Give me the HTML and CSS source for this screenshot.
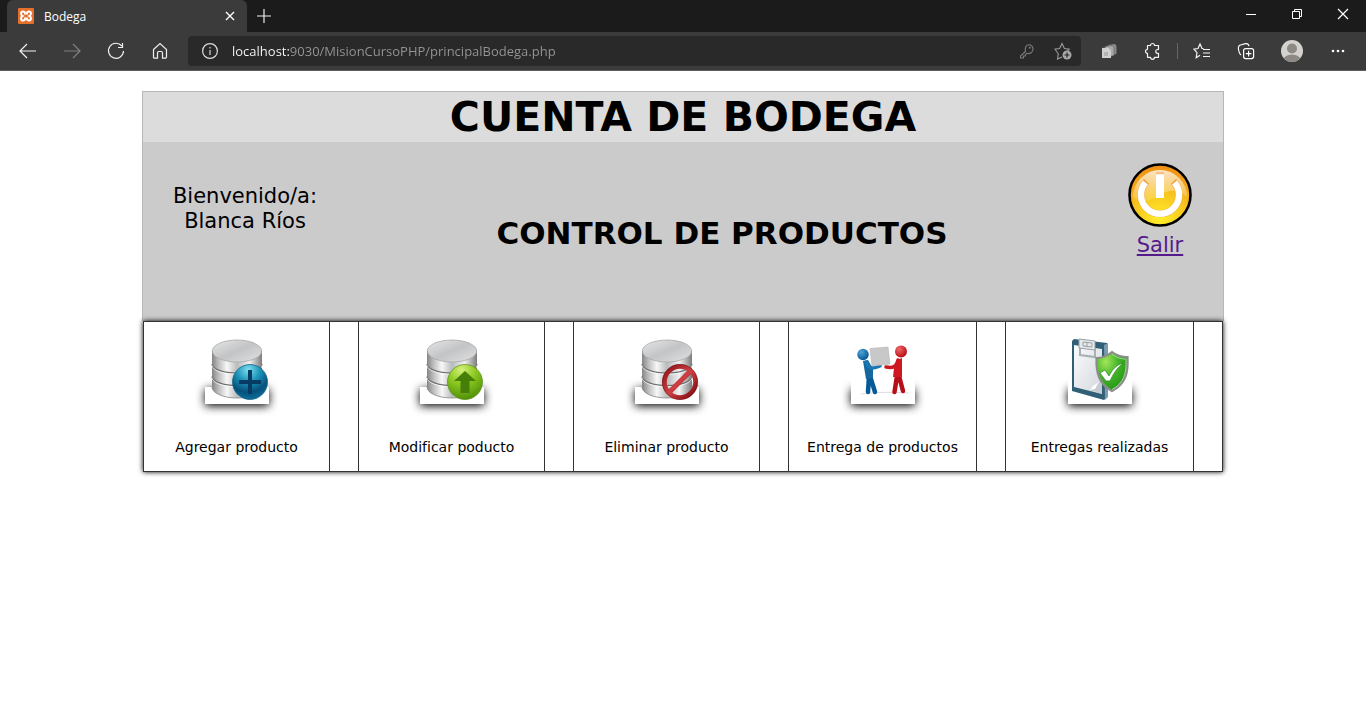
FILE: index.html
```html
<!DOCTYPE html>
<html lang="es">
<head>
<meta charset="utf-8">
<title>Bodega</title>
<link rel="stylesheet" href="styles.css">
</head>
<body>
<svg class="defs" width="0" height="0" aria-hidden="true">
  <defs>
    <linearGradient id="metal"><stop offset="0" stop-color="#858585"/><stop offset=".13" stop-color="#bdbdbd"/><stop offset=".3" stop-color="#f8f8f8"/><stop offset=".5" stop-color="#b9bbbc"/><stop offset=".75" stop-color="#f1f1f1"/><stop offset="1" stop-color="#7c7c7c"/></linearGradient>
    <linearGradient id="lid" x1="0" y1="0" x2="1" y2="1"><stop offset="0" stop-color="#e6e6e6"/><stop offset=".5" stop-color="#c2c4c6"/><stop offset="1" stop-color="#e2e2e2"/></linearGradient>
    <radialGradient id="blue" cx=".45" cy=".15" r=".85"><stop offset="0" stop-color="#7fdfee"/><stop offset=".4" stop-color="#1b93b9"/><stop offset=".75" stop-color="#07507c"/><stop offset="1" stop-color="#0a6f9a"/></radialGradient>
    <radialGradient id="green" cx=".4" cy=".15" r=".9"><stop offset="0" stop-color="#d3f07a"/><stop offset=".45" stop-color="#8cc820"/><stop offset="1" stop-color="#4c8a06"/></radialGradient>
    <linearGradient id="red" x1="0" y1="0" x2="1" y2="1"><stop offset="0" stop-color="#8c1217"/><stop offset=".5" stop-color="#cf4045"/><stop offset="1" stop-color="#7c080c"/></linearGradient>
    <radialGradient id="power" cx=".5" cy=".9" r=".9"><stop offset="0" stop-color="#fff02a"/><stop offset=".5" stop-color="#f8c41e"/><stop offset="1" stop-color="#f08c14"/></radialGradient>
    <linearGradient id="gloss" x1="0" y1="0" x2="0" y2="1"><stop offset="0" stop-color="#fff" stop-opacity=".75"/><stop offset="1" stop-color="#fff" stop-opacity=".12"/></linearGradient>
    <radialGradient id="shield" cx=".3" cy=".25" r=".8"><stop offset="0" stop-color="#a4e65c"/><stop offset=".5" stop-color="#44b428"/><stop offset="1" stop-color="#219414"/></radialGradient>
    <radialGradient id="bluehead" cx=".35" cy=".3" r=".7"><stop offset="0" stop-color="#4fa3d4"/><stop offset="1" stop-color="#075a98"/></radialGradient>
    <radialGradient id="redhead" cx=".35" cy=".3" r=".7"><stop offset="0" stop-color="#ef6a6c"/><stop offset="1" stop-color="#b90d16"/></radialGradient>
    <linearGradient id="paper" x1="0" y1="0" x2="1" y2="1"><stop offset="0" stop-color="#fbfcfd"/><stop offset="1" stop-color="#d2d6dc"/></linearGradient>
    <g id="database">
      <path d="M7 11v36a25 11 0 0 0 50 0V11z" fill="url(#metal)"/>
      <path d="M7 24a25 9 0 0 0 50 0M7 36.500a25 9 0 0 0 50 0" fill="none" stroke="#6d6f71" stroke-width="1.200"/>
      <path d="M7 25.300a25 9 0 0 0 50 0M7 37.800a25 9 0 0 0 50 0" fill="none" stroke="#fff" stroke-width=".7"/>
      <path d="M7 47a25 11 0 0 0 50 0" fill="none" stroke="#858585" stroke-width=".8"/>
      <ellipse cx="32" cy="11" rx="24.700" ry="11" fill="url(#lid)" stroke="#a2a2a2" stroke-width=".7"/>
    </g>
  </defs>
</svg>

<header class="browser">
  <div class="tabs">
    <div class="tab">
      <svg class="icon" width="16" height="16" viewBox="0 0 16 16"><rect width="16" height="16" rx="1" fill="#e5702b"/><path d="M5 3.500c-2.500 0-2.500 3.500-.5 4.500-2 1-2 4.500.5 4.500 1.500 0 2-1 2-2h2c0 1 .5 2 2 2 2.500 0 2.500-3.500.5-4.500 2-1 2-4.500-.5-4.500-1.500 0-2 1-2 2H7c0-1-.5-2-2-2z" fill="none" stroke="#fff" stroke-width="2"/></svg>
      <span class="tab-title">Bodega</span>
      <button class="tool close" aria-label="Cerrar pestaña"><svg width="10" height="10" viewBox="0 0 10 10"><path d="M1 1l8 8M9 1L1 9" stroke="#fff" stroke-width="1.400"/></svg></button>
    </div>
    <button class="tool new" aria-label="Nueva pestaña"><svg width="14" height="14" viewBox="0 0 14 14"><path d="M7 0v14M0 7h14" stroke="#eee" stroke-width="1.200"/></svg></button>
    <div class="window-buttons">
      <button class="tool" aria-label="Minimizar"><svg width="10" height="10" viewBox="0 0 10 10"><path d="M0 5.500h10" stroke="#fff"/></svg></button>
      <button class="tool" aria-label="Restaurar"><svg width="10" height="10" viewBox="0 0 10 10"><path d="M.5 2.500h7v7h-7zM2.500 2.500v-2h7v7h-2" fill="none" stroke="#fff"/></svg></button>
      <button class="tool" aria-label="Cerrar"><svg width="10" height="10" viewBox="0 0 10 10"><path d="M0 0l10 10M10 0L0 10" stroke="#fff" stroke-width="1.200"/></svg></button>
    </div>
  </div>
  <div class="toolbar">
    <button class="tool" aria-label="Atrás"><svg width="18" height="16" viewBox="0 0 18 16"><path d="M17 8H1.500M8 1L1 8l7 7" fill="none" stroke="#f4f4f4" stroke-width="1.200"/></svg></button>
    <button class="tool" aria-label="Adelante"><svg width="18" height="16" viewBox="0 0 18 16"><path d="M1 8h15.500M10 1l7 7-7 7" fill="none" stroke="#808080" stroke-width="1.200"/></svg></button>
    <button class="tool" aria-label="Actualizar"><svg width="18" height="18" viewBox="0 0 18 18"><path d="M14.800 4A7.500 7.500 0 1 0 16.500 9M15.500 1v4.500H11" fill="none" stroke="#f0f0f0" stroke-width="1.200"/></svg></button>
    <button class="tool" aria-label="Inicio"><svg width="16" height="18" viewBox="0 0 16 18"><path d="M1.500 7.500L8 1.500l6.500 6v7.500c0 .8-.3 1.200-1 1.200h-3V11c0-1-.5-1.500-1.200-1.500H6.700c-.7 0-1.200.5-1.200 1.500v5.200h-3c-.7 0-1-.4-1-1.200z" fill="none" stroke="#eee" stroke-width="1.200"/></svg></button>
    <div class="address">
      <svg class="icon" width="16" height="16" viewBox="0 0 16 16"><circle cx="8" cy="8" r="7.400" fill="none" stroke="#ddd" stroke-width="1.200"/><path d="M8 7v5M8 4v1.500" stroke="#ccc" stroke-width="1.300"/></svg>
      <input class="url" type="text" aria-label="Dirección" value="localhost:9030/MisionCursoPHP/principalBodega.php">
      <button class="tool" aria-label="Contraseñas"><svg width="16" height="16" viewBox="0 0 16 16"><path d="M6.500 8.500L1.500 13v2h3v-2h2v-1.500l1.500-1.200c3 1 6-1 6-4.300a4.300 4.300 0 0 0-4.300-4.300C7 1.700 5.500 5.500 6.500 8.500z" fill="none" stroke="#7d7d7d" stroke-width="1.100"/><circle cx="10.800" cy="4.800" r="1" fill="#7d7d7d"/></svg></button>
      <button class="tool" aria-label="Agregar a favoritos"><svg width="18" height="18" viewBox="0 0 18 18"><path d="M8 15l-4.500 2 .8-5.200L1 7.200l4.600-.7L8 1.500l2.400 5 4.800.7-1.700 1.800" fill="none" stroke="#9c9c9c" stroke-width="1.100"/><circle cx="13" cy="13" r="4.500" fill="#a6a6a6"/><path d="M13 10.500v5M10.500 13h5" stroke="#292929" stroke-width="1.200"/></svg></button>
    </div>
    <div class="actions">
      <button class="tool" aria-label="Extensión"><svg width="16" height="16" viewBox="0 0 16 16"><path d="M7 2l7-1 1.500 2v8l-5 1z" fill="#8a8a8a"/><path d="M4 3.500l7-1 2 2v8l-4 1z" fill="#a8a8a8" stroke="#606060" stroke-width=".6"/><path d="M1 5l6-.5 3 3V15H1z" fill="#d0d0d0"/><path d="M3 9h4v4H3z" fill="#b4b4b4"/></svg></button>
      <button class="tool" aria-label="Extensiones"><svg width="18" height="18" viewBox="0 0 18 18"><path d="M3.500 3.500h3a2 2 0 0 1 4 0h4v4h-.8a1.900 1.900 0 0 0 0 3.800h.8v4h-4a2 2 0 0 1-4 0h-3v-4a2 2 0 0 1 0-4z" fill="none" stroke="#f4f4f4" stroke-width="1.200" stroke-linejoin="round"/></svg></button>
      <span class="divider"></span>
      <button class="tool" aria-label="Favoritos"><svg width="18" height="18" viewBox="0 0 18 18"><path d="M10.500 6.500H9L7 2 5 6.500l-4 .6 3 3.600-.8 5L7 13.300M10 7.500h7M10 11h7M10 14.500h7" fill="none" stroke="#f4f4f4" stroke-width="1.200"/></svg></button>
      <button class="tool" aria-label="Colecciones"><svg width="18" height="18" viewBox="0 0 18 18"><rect x="6.600" y="6.600" width="10" height="10" rx="2" fill="none" stroke="#fff" stroke-width="1.200"/><path d="M11.600 8.800v5.600M8.800 11.600h5.600M4.200 13C2.500 12.500 2 10 1.500 7.500 1 4.500 1.500 3.500 3.500 3l5-1.300c2-.5 3 .5 3.500 2.500" fill="none" stroke="#fff" stroke-width="1.200"/></svg></button>
      <button class="tool profile" aria-label="Perfil"><svg width="22" height="22" viewBox="0 0 22 22"><clipPath id="face"><circle cx="11" cy="11" r="11"/></clipPath><g clip-path="url(#face)"><path d="M0 0h22v22H0z" fill="#d4d2ce"/><circle cx="11" cy="8.500" r="5" fill="#8d8985"/><ellipse cx="11" cy="20" rx="8.500" ry="5.500" fill="#8d8985"/></g></svg></button>
      <button class="tool" aria-label="Más opciones"><svg width="14" height="4" viewBox="0 0 14 4"><circle cx="2" cy="2" r="1.300" fill="#fff"/><circle cx="7" cy="2" r="1.300" fill="#fff"/><circle cx="12" cy="2" r="1.300" fill="#fff"/></svg></button>
    </div>
  </div>
</header>

<main class="page">
  <section class="account">
    <h1 class="title">CUENTA DE BODEGA</h1>
    <div class="summary">
      <p class="welcome">Bienvenido/a:<br>Blanca Ríos</p>
      <h2 class="subtitle">CONTROL DE PRODUCTOS</h2>
      <a class="logout" href="#salir">
        <svg width="64" height="64" viewBox="0 0 64 64"><circle cx="32" cy="32" r="30.500" fill="url(#power)" stroke="#000" stroke-width="2.600"/><path d="M5 34a27 27 0 0 1 54 0c-8-8-18-8-27-2S12 41 5 34z" fill="url(#gloss)"/><path d="M18.500 18.500a19 19 0 1 0 27 0" fill="none" stroke="#ee9a3a" stroke-width="7"/><path d="M17.500 19.500a19 19 0 1 0 29 0" fill="none" stroke="#fff" stroke-width="6.500"/><path d="M28 10h8" stroke="#ee9a5a"/><path d="M28 11.500h8V35h-8z" fill="#fff"/></svg>
        <span>Salir</span>
      </a>
    </div>
  </section>

  <nav class="menu" aria-label="Productos">
    <a class="option" href="#agregar">
      <span class="picture"><svg width="64" height="64" viewBox="0 0 64 64"><use href="#database"/><circle cx="45" cy="42" r="17.500" fill="url(#blue)" stroke="#0b5b80" stroke-width=".7"/><path d="M43 30h4v10h9v4h-9v10h-4V44h-9v-4h9z" fill="#063c63"/></svg></span>
      <span>Agregar producto</span>
    </a>
    <a class="option" href="#modificar">
      <span class="picture"><svg width="64" height="64" viewBox="0 0 64 64"><use href="#database"/><circle cx="45" cy="42" r="17.500" fill="url(#green)" stroke="#568f10" stroke-width=".7"/><path d="M45 31l11 10h-6.500v12h-9V41H34z" fill="#467f08"/></svg></span>
      <span>Modificar poducto</span>
    </a>
    <a class="option" href="#eliminar">
      <span class="picture"><svg width="64" height="64" viewBox="0 0 64 64"><use href="#database"/><path d="M34.500 52L55 31.500" stroke="url(#red)" stroke-width="5"/><circle cx="45" cy="42" r="15.500" fill="none" stroke="url(#red)" stroke-width="4.500"/><circle cx="45" cy="42" r="17.600" fill="none" stroke="#710a0d" stroke-width=".6"/></svg></span>
      <span>Eliminar producto</span>
    </a>
    <a class="option" href="#entrega">
      <span class="picture"><svg class="solid" width="64" height="64" viewBox="0 0 64 64"><path d="M10 54c14-2 36-2 47-1" stroke="#ddd" fill="none"/><path d="M18 36l-1 16M19 36l5 16" stroke="#075a98" stroke-width="4.500" stroke-linecap="round"/><path d="M12 21l5-1 5 9v9l-7 1z" fill="#15689f"/><path d="M15 22c3 7 7 7 14 4" fill="none" stroke="#1b77b3" stroke-width="3.500" stroke-linecap="round"/><circle cx="12" cy="14.500" r="5.700" fill="url(#bluehead)"/><path d="M19 8.500l18-1.500 2 17-18 2z" fill="#c8c8c8" stroke="#b5b5b5" stroke-width=".6"/><path d="M46 36l-2.500 16M48 36l4 15" stroke="#b80e18" stroke-width="4.500" stroke-linecap="round"/><path d="M46 20l5-2v19h-9l1-9z" fill="#cf1822"/><path d="M47 20c-2 8-6 8-12 7" fill="none" stroke="#cb1721" stroke-width="3.500" stroke-linecap="round"/><circle cx="50" cy="11.500" r="6" fill="url(#redhead)"/></svg></span>
      <span>Entrega de productos</span>
    </a>
    <a class="option" href="#realizadas">
      <span class="picture"><svg class="solid" width="64" height="64" viewBox="0 0 64 64"><path d="M4 1l2-2 33 4v54l-3 3L4 51z" fill="#315f76"/><path d="M36 5l4-2v54l-3 3z" fill="#789eae"/><path d="M6 5l28 4v45L6 47z" fill="url(#paper)"/><path d="M22 50l9-8 3 2v10z" fill="#c6cbd1"/><path d="M22 50l5-1 4-7-6 4z" fill="#fff"/><path d="M12 7v8l15 2V8" fill="none" stroke="#a8b0b6" stroke-width="2"/><path d="M11-1l16 2v9l-16-2z" fill="#e7eaec" stroke="#9a9fa4"/><path d="M15 2l9 1v4l-9-1zM19 2v4" fill="none" stroke="#989ea3"/><path d="M44 12c5 4 10 5 15.500 5 1 16-2 27-15.500 34-13-7-16-18-15.500-33C35 18 39 16 44 12z" fill="url(#shield)" stroke="#8a8f8b" stroke-width="2.200"/><path d="M44 14c5 4 9 5 14 5 .6 14-2 24-14 30.500" fill="none" stroke="#d7e5d1" stroke-width=".7"/><path d="M32 33l5-3 4 6c3-6 7-11 14-13-6 5-10 11-13 18h-4z" fill="#fff" stroke="#288b1b" stroke-width=".7"/></svg></span>
      <span>Entregas realizadas</span>
    </a>
  </nav>
</main>
</body>
</html>
```
FILE: styles.css
```css
* { box-sizing: border-box; }

body {
  min-height: 100vh;
  margin: 0;
  background: #fff;
  color: #000;
  font-family: Verdana, "DejaVu Sans", sans-serif;
}

.defs { position: absolute; }

svg { display: block; overflow: visible; }

/* Browser frame */
.browser {
  background: #3b3b3b;
  border-bottom: 1px solid #5c5c5c;
  font-family: "Segoe UI", "Open Sans", sans-serif;
}

.tabs {
  display: flex;
  height: 32px;
  padding-left: 7px;
  background: #1b1b1b;
}

.tab {
  display: flex;
  align-items: center;
  gap: 10px;
  width: 240px;
  padding: 0 6px 0 11px;
  border-radius: 6px 6px 0 0;
  background: #3b3b3b;
}

.tab-title {
  flex: 1;
  color: #fff;
  font-size: 12px;
}

.icon { flex: none; }

.tool {
  display: grid;
  place-items: center;
  flex: none;
  width: 44px;
  height: 32px;
  padding: 0;
  border: 0;
  background: none;
}

.tool.close { width: 22px; }

.tool.new { width: 34px; }

.tool.profile { width: 48px; }

.window-buttons {
  display: flex;
  margin-left: auto;
}

.window-buttons .tool {
  width: 46px;
  height: 28px;
}

.toolbar {
  display: flex;
  align-items: center;
  height: 38px;
  padding: 0 6px;
}

.address {
  display: flex;
  flex: 1;
  align-items: center;
  height: 30px;
  margin-left: 6px;
  padding-left: 14px;
  border-radius: 4px;
  background: #292929;
}

.address .tool { width: 36px; }

.url {
  flex: 1;
  min-width: 0;
  margin-left: 14px;
  padding: 0;
  border: 0;
  outline: 0;
  background: linear-gradient(90deg, #fff 58px, #969696 58px) text;
  color: transparent;
  font: 13px "Segoe UI", "Open Sans", sans-serif;
}

.actions {
  display: flex;
  align-items: center;
  margin-left: 6px;
}

.divider {
  width: 1px;
  height: 16px;
  margin: 0 2px;
  background: #666;
}

/* Page */
.page {
  width: calc(100% - 32px);
  max-width: 1082px;
  margin: 20px auto 0;
}

.account {
  border: 1px solid #b7b7b7;
  border-bottom: 0;
  background: #cbcbcb;
}

.title {
  margin: 0;
  background: #dcdcdc;
  font-size: 41px;
  line-height: 50px;
  text-align: center;
}

.summary {
  display: grid;
  grid-template-columns: 204px 1fr 126px;
  justify-items: center;
  min-height: 179px;
  padding-top: 21px;
  font-size: 21px;
  line-height: 25px;
  text-align: center;
}

.welcome { margin: 21px 0 0; }

.subtitle {
  margin: 50px 0 0;
  font-size: 31px;
  line-height: 40px;
}

.logout {
  display: flex;
  flex-direction: column;
  align-items: center;
  align-self: start;
  gap: 6px;
  color: #551a8b;
}

.menu {
  display: grid;
  grid-template-columns: 186fr 29fr 186fr 29fr 186fr 29fr 188fr 29fr 188fr 28fr;
  margin: 0 1px;
  border: 1px solid #333;
  background: #fff;
  box-shadow: 0 0 5px #000;
}

.option {
  display: flex;
  flex-direction: column;
  align-items: center;
  gap: 33px;
  padding: 18px 0 13px;
  border-right: 1px solid #333;
  color: #000;
  font-size: 14px;
  line-height: 21px;
  text-align: center;
  text-decoration: none;
}

.option:not(:first-child) {
  border-left: 1px solid #333;
  margin-left: -1px;
}

.option:nth-child(1) { grid-column: 1; }
.option:nth-child(2) { grid-column: 3; }
.option:nth-child(3) { grid-column: 5; }
.option:nth-child(4) { grid-column: 7; }
.option:nth-child(5) { grid-column: 9; }

.picture {
  position: relative;
  width: 64px;
  height: 64px;
}

/* Short plate whose shadow falls under the picture */
.picture::before {
  content: "";
  position: absolute;
  right: 0;
  bottom: 0;
  left: 0;
  height: 17px;
  background: #fff;
  box-shadow: 0 2px 10px #000;
}

.picture svg { position: relative; }

.picture .solid { background: #fff; }
```
